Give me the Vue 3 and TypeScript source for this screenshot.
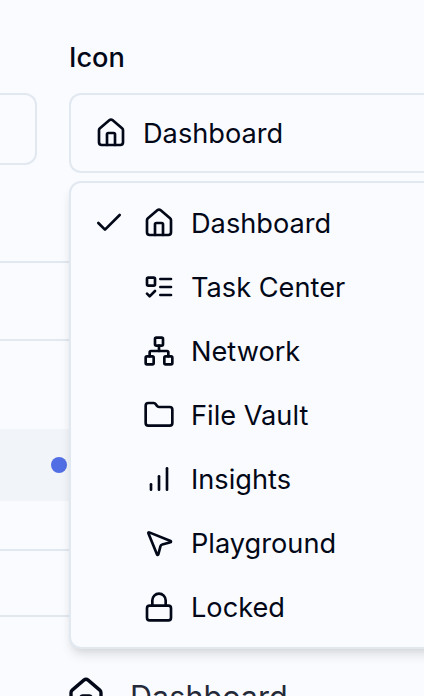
<script setup lang="ts">
interface Option {
  label: string
  icon: string
}

const icons: Record<string, string[]> = {
  house: [
    'M15 21v-8a1 1 0 0 0-1-1h-4a1 1 0 0 0-1 1v8',
    'M3 10a2 2 0 0 1 .709-1.528l7-5.999a2 2 0 0 1 2.582 0l7 5.999A2 2 0 0 1 21 10v9a2 2 0 0 1-2 2H5a2 2 0 0 1-2-2z',
  ],
  tasks: [
    'M4 5h4a1 1 0 0 1 1 1v4a1 1 0 0 1-1 1H4a1 1 0 0 1-1-1V6a1 1 0 0 1 1-1z',
    'm3 17 2 2 4-4',
    'M13 6h8',
    'M13 12h8',
    'M13 18h8',
  ],
  network: [
    'M17 16h4a1 1 0 0 1 1 1v4a1 1 0 0 1-1 1h-4a1 1 0 0 1-1-1v-4a1 1 0 0 1 1-1z',
    'M3 16h4a1 1 0 0 1 1 1v4a1 1 0 0 1-1 1H3a1 1 0 0 1-1-1v-4a1 1 0 0 1 1-1z',
    'M10 2h4a1 1 0 0 1 1 1v4a1 1 0 0 1-1 1h-4a1 1 0 0 1-1-1V3a1 1 0 0 1 1-1z',
    'M5 16v-3a1 1 0 0 1 1-1h12a1 1 0 0 1 1 1v3',
    'M12 12V8',
  ],
  folder: [
    'M20 20a2 2 0 0 0 2-2V8a2 2 0 0 0-2-2h-7.9a2 2 0 0 1-1.69-.9L9.6 3.9A2 2 0 0 0 7.93 3H4a2 2 0 0 0-2 2v13a2 2 0 0 0 2 2Z',
  ],
  bars: ['M12 20V10', 'M18 20V4', 'M6 20v-4'],
  pointer: [
    'M4.037 4.688a.495.495 0 0 1 .651-.651l16 6.5a.5.5 0 0 1-.063.947l-6.124 1.58a2 2 0 0 0-1.438 1.435l-1.579 6.126a.5.5 0 0 1-.947.063z',
  ],
  lock: [
    'M5 11h14a2 2 0 0 1 2 2v7a2 2 0 0 1-2 2H5a2 2 0 0 1-2-2v-7a2 2 0 0 1 2-2z',
    'M7 11V7a5 5 0 0 1 10 0v4',
  ],
}

const options: Option[] = [
  { label: 'Dashboard', icon: 'house' },
  { label: 'Task Center', icon: 'tasks' },
  { label: 'Network', icon: 'network' },
  { label: 'File Vault', icon: 'folder' },
  { label: 'Insights', icon: 'bars' },
  { label: 'Playground', icon: 'pointer' },
  { label: 'Locked', icon: 'lock' },
]
const selected = options[0]
</script>

<template>
  <main class="page">
    <div class="form">
      <div class="name-input"></div>
      <div class="field">
        <label class="label">Icon</label>
        <div class="trigger">
          <svg class="icon" viewBox="0 0 24 24">
            <path v-for="d in icons[selected.icon]" :key="d" :d="d" />
          </svg>
          <span class="text">{{ selected.label }}</span>
        </div>
      </div>
    </div>

    <div class="table">
      <div class="row head"></div>
      <div class="row body"></div>
      <div class="active"><span class="dot"></span></div>
      <div class="row gap"></div>
      <div class="row foot"></div>
    </div>

    <div class="preview">
      <svg class="icon large" viewBox="0 0 24 24">
        <path v-for="d in icons.house" :key="d" :d="d" />
      </svg>
      <span class="title">Dashboard</span>
    </div>

    <ul class="menu">
      <li v-for="o in options" :key="o.label" class="option">
        <span class="check">
          <svg v-if="o === selected" class="icon" viewBox="0 0 24 24">
            <path d="M20 6 9 17l-5-5" />
          </svg>
        </span>
        <svg class="icon" viewBox="0 0 24 24">
          <path v-for="d in icons[o.icon]" :key="d" :d="d" />
        </svg>
        <span class="text">{{ o.label }}</span>
      </li>
    </ul>
  </main>
</template>

<style>
body {
  background: #fafbff;
}
</style>

<style scoped>
.page {
  position: relative;
  box-sizing: border-box;
  width: 100%;
  height: 696px;
  padding-top: 37px;
  overflow: hidden;
  background: #fafbff;
  color: #020817;
  font-family: Inter, sans-serif;
  font-size: 27.2px;
  line-height: 40px;
}
.page * {
  box-sizing: border-box;
}
.form {
  display: flex;
  gap: 32px;
  height: 136px;
}
.name-input {
  flex: none;
  width: 37px;
  height: 72px;
  margin-top: 56px;
  border: 2px solid #e2e8f0;
  border-left: 0;
  border-radius: 0 12px 12px 0;
}
.field {
  flex: 1;
  display: flex;
  flex-direction: column;
  gap: 16px;
}
.label {
  height: 40px;
  padding-top: 1px;
  font-weight: 500;
}
.trigger {
  display: flex;
  align-items: center;
  gap: 16px;
  height: 80px;
  padding-left: 24px;
  border: 2px solid #e2e8f0;
  border-right: 0;
  border-radius: 12px 0 0 12px;
}
.icon {
  flex: none;
  display: block;
  width: 32px;
  height: 32px;
  fill: none;
  stroke: currentColor;
  stroke-width: 2;
  stroke-linecap: round;
  stroke-linejoin: round;
}
.text {
  padding-top: 1px;
  white-space: nowrap;
}
.table {
  margin-top: 88px;
}
.row {
  border-top: 2px solid #e2e8f0;
}
.head {
  height: 78px;
}
.body {
  height: 90px;
}
.active {
  display: flex;
  align-items: center;
  height: 72px;
  padding-left: 51px;
  background: #f1f5f9;
}
.dot {
  width: 16px;
  height: 16px;
  border-radius: 50%;
  background: #526ee4;
}
.gap {
  height: 66px;
  margin-top: 48px;
}
.foot {
  height: 61px;
}
.preview {
  display: flex;
  align-items: center;
  gap: 24px;
  height: 40px;
  padding-left: 66px;
}
.large {
  width: 40px;
  height: 40px;
}
.title {
  padding-top: 2px;
  color: #252a39;
  font-size: 30.6px;
}
.menu {
  position: absolute;
  top: 181px;
  left: 69px;
  right: -40px;
  margin: 0;
  padding: 8px;
  list-style: none;
  border: 2px solid #e2e8f0;
  border-radius: 12px;
  background: #fafbff;
  box-shadow: 0 8px 12px -2px rgba(0, 0, 0, 0.1), 0 4px 8px -4px rgba(0, 0, 0, 0.1);
}
.option {
  display: flex;
  align-items: center;
  gap: 16px;
  height: 64px;
  padding-left: 14px;
}
.check {
  flex: none;
  width: 34px;
}
</style>
